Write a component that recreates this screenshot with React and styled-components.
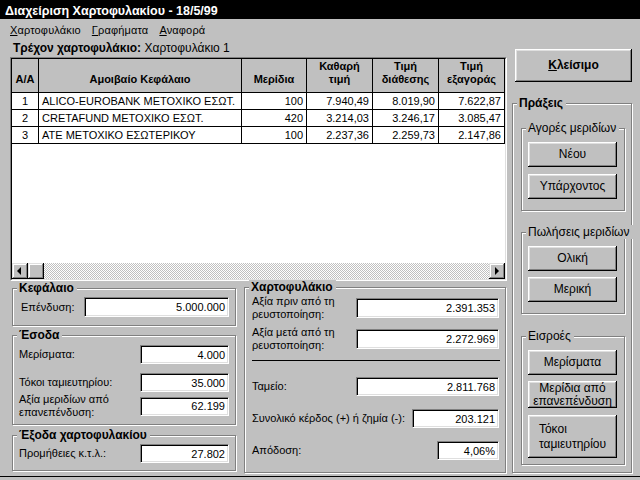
import React from 'react';
import styled, { createGlobalStyle } from 'styled-components';

const Global = createGlobalStyle`
  html, body { margin: 0; padding: 0; background: #c0c0c0; }
  body { font-family: "Liberation Sans", Arial, sans-serif; }
`;

const Root = styled.div`
  width: 640px;
  height: 480px;
  overflow: hidden;
  background: #c0c0c0;
  color: #000;
  font-family: "Liberation Sans", Arial, sans-serif;
  font-size: 11px;
  display: flex;
  flex-direction: column;
  box-shadow: inset 0 -3px 0 #c0c0c0, inset 0 -4px 0 #000;
`;

const TitleBar = styled.div`
  height: 19px;
  flex-shrink: 0;
  box-sizing: border-box;
  padding: 2px 0 0 5px;
  background: #000;
  color: #fff;
  font-weight: bold;
  font-size: 12.5px;
  display: flex;
  align-items: center;
`;

const MenuBar = styled.div`
  height: 19px;
  flex-shrink: 0;
  box-sizing: border-box;
  padding: 2px 0 0 10px;
  display: flex;
  align-items: center;
  gap: 11px;
  font-size: 11px;
  letter-spacing: 0.15px;
`;

const MenuItem = styled.span`
  u { text-decoration: underline; }
`;

const Body = styled.div`
  display: flex;
  padding-left: 10px;
`;

const LeftCol = styled.div`
  width: 497px;
  display: flex;
  flex-direction: column;
`;

const RightCol = styled.div`
  width: 121px;
  margin-left: 5px;
  display: flex;
  flex-direction: column;
`;

const CurrentLine = styled.div`
  height: 19px;
  box-sizing: border-box;
  padding: 1px 0 0 3px;
  display: flex;
  align-items: center;
  font-size: 12px;
  white-space: pre;
  b { font-weight: bold; }
`;

const GridFrame = styled.div`
  height: 224px;
  box-sizing: border-box;
  border: 1px solid;
  border-color: #808080 #fff #fff #808080;
  flex-shrink: 0;
`;

const GridInner = styled.div`
  height: 100%;
  box-sizing: border-box;
  border: 1px solid;
  border-color: #000 #dfdfdf #dfdfdf #000;
  background: #fff;
  display: flex;
  flex-direction: column;
  overflow: hidden;
`;

const GridTable = styled.div`
  flex: 1;
  display: grid;
  grid-template-columns: 27px 203px 65px 66px 66px 66px;
  grid-auto-rows: 17px;
  grid-template-rows: 34px;
  align-content: start;
  overflow: hidden;
`;

const HeadCell = styled.div`
  box-sizing: border-box;
  background: #c0c0c0;
  border-right: 1px solid #000;
  border-bottom: 1px solid #000;
  display: flex;
  align-items: flex-end;
  justify-content: center;
  text-align: center;
  padding-bottom: 6px;
  font-weight: bold;
  font-size: 11px;
  line-height: 13px;
  white-space: pre-line;
`;

const Cell = styled.div`
  box-sizing: border-box;
  border-right: 1px solid #000;
  border-bottom: 1px solid #000;
  padding: 0 3px;
  line-height: 16px;
  font-size: 11px;
  white-space: nowrap;
  overflow: hidden;
  text-align: ${(p) => p.$align || 'left'};
`;

const ScrollBar = styled.div`
  height: 16px;
  flex-shrink: 0;
  display: flex;
`;

const ScrollBtn = styled.div`
  width: 16px;
  height: 16px;
  box-sizing: border-box;
  background: #c0c0c0;
  box-shadow: inset -1px -1px 0 #000, inset 1px 1px 0 #dfdfdf, inset -2px -2px 0 #808080, inset 2px 2px 0 #fff;
  display: flex;
  align-items: center;
  justify-content: center;
  flex-shrink: 0;
`;

const ScrollTrack = styled.div`
  flex: 1;
  background-color: #fff;
  background-image: conic-gradient(#c0c0c0 25%, #fff 0 50%, #c0c0c0 0 75%, #fff 0);
  background-size: 2px 2px;
`;

const BottomRow = styled.div`
  display: flex;
`;

const LeftPanels = styled.div`
  width: 228px;
  display: flex;
  flex-direction: column;
`;

const Group = styled.div`
  box-sizing: border-box;
  width: ${(p) => p.$w}px;
  height: ${(p) => p.$h}px;
  margin: ${(p) => p.$mt || 0}px 0 0 ${(p) => p.$ml || 0}px;
  padding: 0 ${(p) => p.$pr ?? 7}px 0 ${(p) => p.$pl ?? 7}px;
  border: 1px solid #808080;
  box-shadow: inset 1px 1px 0 #fff, 1px 1px 0 #fff;
  display: flex;
  flex-direction: column;
  flex-shrink: 0;
`;

const GroupTitle = styled.div`
  align-self: flex-start;
  height: 14px;
  line-height: 14px;
  margin: -8px 0 0 ${(p) => 4 - (p.$pl ?? 7)}px;
  padding: 0 3px 0 2px;
  background: #c0c0c0;
  font-size: 12px;
  font-weight: ${(p) => (p.$bold ? 'bold' : 'normal')};
  white-space: nowrap;
`;

const Row = styled.div`
  height: ${(p) => p.$h || 19}px;
  margin-top: ${(p) => p.$mt || 0}px;
  display: flex;
  align-items: center;
  justify-content: space-between;
  flex-shrink: 0;
`;

const Label = styled.div`
  font-size: 11px;
  line-height: 13px;
  white-space: nowrap;
`;

const Field = styled.div`
  box-sizing: border-box;
  width: ${(p) => p.$w}px;
  height: ${(p) => p.$h || 19}px;
  background: #fff;
  border: 1px solid;
  border-color: #808080 #fff #fff #808080;
  box-shadow: inset 1px 1px 0 #000, inset -1px -1px 0 #dfdfdf;
  padding-right: 3px;
  display: flex;
  align-items: center;
  justify-content: flex-end;
  font-size: 11px;
`;

const Divider = styled.div`
  height: 1px;
  background: #000;
  margin: ${(p) => p.$mt}px -1px 0 0;
  flex-shrink: 0;
`;

const Btn = styled.button`
  box-sizing: border-box;
  width: ${(p) => p.$w}px;
  height: ${(p) => p.$h}px;
  margin: ${(p) => p.$mt || 0}px 0 0 ${(p) => p.$ml || 0}px;
  padding: 0;
  border: none;
  background: #c0c0c0;
  color: #000;
  font-family: "Liberation Sans", Arial, sans-serif;
  font-size: 12px;
  line-height: 13px;
  font-weight: ${(p) => (p.$bold ? 'bold' : 'normal')};
  box-shadow: inset -1px -1px 0 #000, inset 1px 1px 0 #fff, inset -2px -2px 0 #808080, inset 2px 2px 0 #dfdfdf;
  display: flex;
  align-items: center;
  justify-content: center;
  text-align: center;
  flex-shrink: 0;
  u { text-decoration: underline; }
`;

const BtnLines = styled.span`
  display: inline-block;
  text-align: ${(p) => p.$align || 'center'};
  line-height: ${(p) => p.$lh || 13}px;
`;

const LeftArrow = () => (
  <svg width="16" height="16" viewBox="0 0 16 16">
    <polygon points="5,8 9,4 9,12" fill="#000" />
  </svg>
);
const RightArrow = () => (
  <svg width="16" height="16" viewBox="0 0 16 16">
    <polygon points="10,8 6,4 6,12" fill="#000" />
  </svg>
);

const rows = [
  ['1', 'ALICO-EUROBANK ΜΕΤΟΧΙΚΟ ΕΣΩΤ.', '100', '7.940,49', '8.019,90', '7.622,87'],
  ['2', 'CRETAFUND ΜΕΤΟΧΙΚΟ ΕΣΩΤ.', '420', '3.214,03', '3.246,17', '3.085,47'],
  ['3', 'ATE ΜΕΤΟΧΙΚΟ ΕΣΩΤΕΡΙΚΟΥ', '100', '2.237,36', '2.259,73', '2.147,86'],
];

const headers = ['A/A', 'Αμοιβαίο Κεφάλαιο', 'Μερίδια', 'Καθαρή\nτιμή', 'Τιμή\nδιάθεσης', 'Τιμή\nεξαγοράς'];

export default function App() {
  return (
    <>
      <Global />
      <Root>
        <TitleBar>Διαχείριση Χαρτοφυλακίου - 18/5/99</TitleBar>
        <MenuBar>
          <MenuItem><u>Χ</u>αρτοφυλάκιο</MenuItem>
          <MenuItem><u>Γ</u>ραφήματα</MenuItem>
          <MenuItem><u>Α</u>ναφορά</MenuItem>
        </MenuBar>
        <Body>
          <LeftCol>
            <CurrentLine>
              <b>Τρέχον χαρτοφυλάκιο:</b> Χαρτοφυλάκιο 1
            </CurrentLine>
            <GridFrame>
              <GridInner>
                <GridTable>
                  {headers.map((h) => (
                    <HeadCell key={h}>{h}</HeadCell>
                  ))}
                  {rows.map((r) =>
                    r.map((c, i) => (
                      <Cell key={r[0] + i} $align={i === 0 ? 'center' : i === 1 ? 'left' : 'right'}>
                        {c}
                      </Cell>
                    ))
                  )}
                </GridTable>
                <ScrollBar>
                  <ScrollBtn><LeftArrow /></ScrollBtn>
                  <ScrollBtn />
                  <ScrollTrack />
                  <ScrollBtn><RightArrow /></ScrollBtn>
                </ScrollBar>
              </GridInner>
            </GridFrame>
            <BottomRow>
              <LeftPanels>
                <Group $w={224} $h={38} $mt={7} $ml={2} $pl={8} $pr={6}>
                  <GroupTitle $bold $pl={8}>Κεφάλαιο</GroupTitle>
                  <Row $mt={2} $h={20}>
                    <Label>Επένδυση:</Label>
                    <Field $w={145} $h={20}>5.000.000</Field>
                  </Row>
                </Group>
                <Group $w={224} $h={90} $mt={9} $ml={2} $pl={6} $pr={6}>
                  <GroupTitle $bold $pl={6}>Έσοδα</GroupTitle>
                  <Row $mt={3}>
                    <Label>Μερίσματα:</Label>
                    <Field $w={89}>4.000</Field>
                  </Row>
                  <Row $mt={9}>
                    <Label>Τόκοι ταμιευτηρίου:</Label>
                    <Field $w={89}>35.000</Field>
                  </Row>
                  <Row $mt={1} $h={26}>
                    <Label>Αξία μεριδίων από<br />επανεπένδυση:</Label>
                    <Field $w={89}>62.199</Field>
                  </Row>
                </Group>
                <Group $w={224} $h={36} $mt={10} $ml={2} $pl={6} $pr={6}>
                  <GroupTitle $bold $pl={6}>Έξοδα χαρτοφυλακίου</GroupTitle>
                  <Row $mt={2}>
                    <Label>Προμήθειες κ.τ.λ.:</Label>
                    <Field $w={89}>27.802</Field>
                  </Row>
                </Group>
              </LeftPanels>
              <Group $w={262} $h={186} $mt={6} $ml={6} $pl={7} $pr={6}>
                <GroupTitle $bold $pl={7}>Χαρτοφυλάκιο</GroupTitle>
                <Row $mt={1} $h={26}>
                  <Label>Αξία πριν από τη<br />ρευστοποίηση:</Label>
                  <Field $w={143} $h={20}>2.391.353</Field>
                </Row>
                <Row $mt={5} $h={26}>
                  <Label>Αξία μετά από τη<br />ρευστοποίηση:</Label>
                  <Field $w={143} $h={20}>2.272.969</Field>
                </Row>
                <Divider $mt={8} />
                <Row $mt={16}>
                  <Label>Ταμείο:</Label>
                  <Field $w={143}>2.811.768</Field>
                </Row>
                <Row $mt={13}>
                  <Label>Συνολικό κέρδος (+) ή ζημία (-):</Label>
                  <Field $w={87}>203.121</Field>
                </Row>
                <Row $mt={13}>
                  <Label>Απόδοση:</Label>
                  <Field $w={62}>4,06%</Field>
                </Row>
              </Group>
            </BottomRow>
          </LeftCol>
          <RightCol>
            <Btn $w={117} $h={33} $mt={11} $ml={3} $bold>
              <span><u>Κ</u>λείσιμο</span>
            </Btn>
            <Group $w={120} $h={370} $mt={21} $pl={8} $pr={6}>
              <GroupTitle $bold $pl={8}>Πράξεις</GroupTitle>
              <Group $w={104} $h={83} $mt={18} $pl={6} $pr={6}>
                <GroupTitle $pl={6}>Αγορές μεριδίων</GroupTitle>
                <Btn $w={89} $h={25} $mt={7}>Νέου</Btn>
                <Btn $w={89} $h={25} $mt={7}>Υπάρχοντος</Btn>
              </Group>
              <Group $w={104} $h={82} $mt={21} $pl={6} $pr={6}>
                <GroupTitle $pl={6}>Πωλήσεις μεριδίων</GroupTitle>
                <Btn $w={89} $h={25} $mt={7}>Ολική</Btn>
                <Btn $w={89} $h={25} $mt={6}>Μερική</Btn>
              </Group>
              <Group $w={104} $h={129} $mt={22} $pl={6} $pr={6}>
                <GroupTitle $pl={6}>Εισροές</GroupTitle>
                <Btn $w={89} $h={25} $mt={7}>Μερίσματα</Btn>
                <Btn $w={89} $h={27} $mt={6}>
                  <BtnLines>Μερίδια από<br />επανεπένδυση</BtnLines>
                </Btn>
                <Btn $w={89} $h={43} $mt={7}>
                  <BtnLines $align="left" $lh={15}>Τόκοι<br />ταμιευτηρίου</BtnLines>
                </Btn>
              </Group>
            </Group>
          </RightCol>
        </Body>
      </Root>
    </>
  );
}
